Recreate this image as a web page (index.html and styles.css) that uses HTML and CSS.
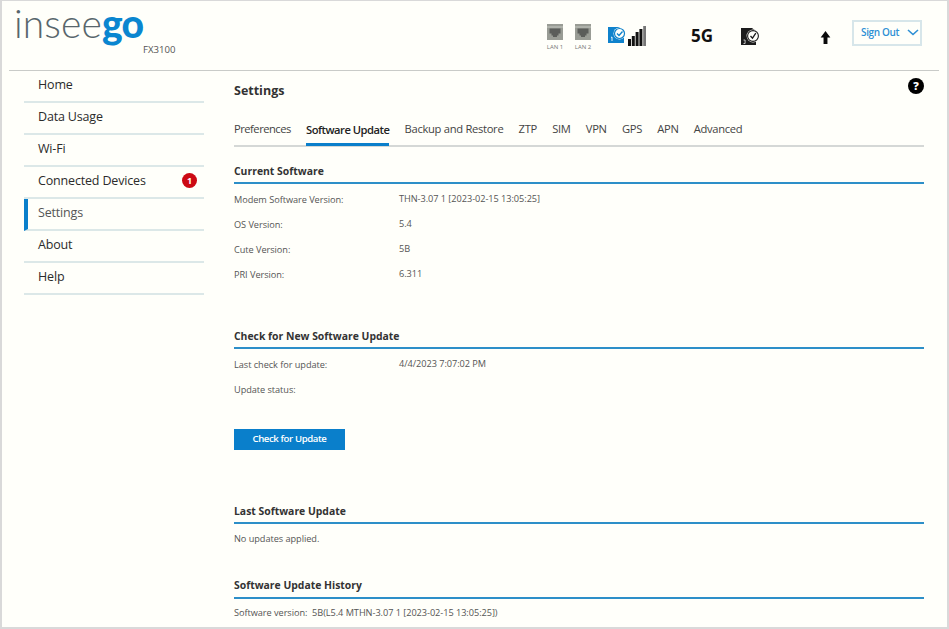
FILE: index.html
```html
<!DOCTYPE html>
<html lang="en">
<head>
<meta charset="utf-8">
<title>Inseego FX3100 Settings</title>
<link rel="stylesheet" href="styles.css">
</head>
<body>
<div class="frame">
  <header class="header">
    <div class="brand">
      <div class="logo"><span class="logo-a">insee</span><span class="logo-b">go</span></div>
      <div class="model">FX3100</div>
    </div>
    <div class="status">
      <div class="lan">
        <svg class="lan-icon" viewBox="0 0 16 16"><rect width="16" height="16" fill="#999c95"/><rect y="2.5" width="16" height="1" fill="#c5c7c1"/><path d="M2.5 4.5h11v5h-2v2h-1.5v1.5H6V11.5H4.5v-2h-2z" fill="#5b5d5a"/></svg>
        <span>LAN 1</span>
      </div>
      <div class="lan lan-second">
        <svg class="lan-icon" viewBox="0 0 16 16"><rect width="16" height="16" fill="#999c95"/><rect y="2.5" width="16" height="1" fill="#c5c7c1"/><path d="M2.5 4.5h11v5h-2v2h-1.5v1.5H6V11.5H4.5v-2h-2z" fill="#5b5d5a"/></svg>
        <span>LAN 2</span>
      </div>
      <svg class="sim-icon" viewBox="0 0 18 16"><path d="M0 0h11l5 4v12H0z" fill="#0f82cc"/><circle cx="11.5" cy="6.5" r="6" fill="#fffffa"/><circle cx="11.5" cy="6.5" r="5" fill="none" stroke="#0f82cc" stroke-width="1.2"/><path d="M9 6.5l2 2 3.5-4" fill="none" stroke="#0f82cc" stroke-width="1.4"/><path d="M3 10.5l1-.5v4" fill="none" stroke="#fff" stroke-width=".9"/></svg>
      <svg class="signal-icon" viewBox="0 0 18 20"><rect x="0" y="13" width="3" height="7" fill="#111"/><rect x="3.8" y="10" width="3" height="10" fill="#111"/><rect x="7.6" y="6" width="3" height="14" fill="#111"/><rect x="11.4" y="3" width="3" height="17" fill="#111"/><rect x="15.2" y="0" width="2.8" height="20" fill="#777"/></svg>
      <div class="net">5G</div>
      <svg class="sim2-icon" viewBox="0 0 19 17"><path d="M0 0h11l4 3v14H0z" fill="#1c1c1c"/><circle cx="12" cy="8" r="6.4" fill="#fffffa"/><circle cx="12" cy="8" r="5.4" fill="none" stroke="#1c1c1c" stroke-width="1.1"/><path d="M9.5 8l2 2.2 3.3-5" fill="none" stroke="#1c1c1c" stroke-width="1.3"/><path d="M2.5 12h1.6v3.5H2.5" fill="none" stroke="#fff" stroke-width=".7"/></svg>
      <svg class="arrow-icon" viewBox="0 0 10 12"><path d="M5 0L9.5 6H6.8v6H3.2V6H.5z" fill="#0a0a0a"/></svg>
      <button class="signout"><span>Sign Out</span><svg class="chev" viewBox="0 0 12 7"><path d="M1 1l5 4.5L11 1" fill="none" stroke="#2d8fd5" stroke-width="1.6"/></svg></button>
    </div>
  </header>
  <div class="body">
    <nav class="side">
      <a class="side-item">Home</a>
      <a class="side-item">Data Usage</a>
      <a class="side-item">Wi-Fi</a>
      <a class="side-item">Connected Devices<span class="badge">1</span></a>
      <a class="side-item active">Settings</a>
      <a class="side-item">About</a>
      <a class="side-item">Help</a>
    </nav>
    <main class="main">
      <div class="title-row">
        <h1 class="title">Settings</h1>
        <span class="help">?</span>
      </div>
      <div class="tabs">
        <a class="tab">Preferences</a>
        <a class="tab current">Software Update</a>
        <a class="tab">Backup and Restore</a>
        <a class="tab">ZTP</a>
        <a class="tab">SIM</a>
        <a class="tab">VPN</a>
        <a class="tab">GPS</a>
        <a class="tab">APN</a>
        <a class="tab">Advanced</a>
      </div>
      <section class="sec sec-current">
        <h2 class="sec-h">Current Software</h2>
        <div class="row"><span class="lbl">Modem Software Version:</span><span class="val">THN-3.07 1 [2023-02-15 13:05:25]</span></div>
        <div class="row"><span class="lbl">OS Version:</span><span class="val">5.4</span></div>
        <div class="row"><span class="lbl">Cute Version:</span><span class="val">5B</span></div>
        <div class="row"><span class="lbl">PRI Version:</span><span class="val">6.311</span></div>
      </section>
      <section class="sec sec-check">
        <h2 class="sec-h">Check for New Software Update</h2>
        <div class="row"><span class="lbl">Last check for update:</span><span class="val">4/4/2023 7:07:02 PM</span></div>
        <div class="row"><span class="lbl">Update status:</span></div>
        <button class="btn">Check for Update</button>
      </section>
      <section class="sec sec-last">
        <h2 class="sec-h">Last Software Update</h2>
        <p class="note">No updates applied.</p>
      </section>
      <section class="sec sec-hist">
        <h2 class="sec-h">Software Update History</h2>
        <p class="note">Software version:&nbsp; 5B(L5.4 MTHN-3.07 1 [2023-02-15 13:05:25])</p>
      </section>
    </main>
  </div>
</div>
</body>
</html>
```
FILE: styles.css
```css
* { box-sizing: border-box; }
html, body { margin: 0; padding: 0; height: 100%; }
body { background: #fff; font-family: "Open Sans", "Noto Sans", sans-serif; color: #333; overflow: hidden; }
.frame { width: 949px; height: 629px; background: #fffffa; border: solid #d9d9d9; border-width: 1px 2px 2px 2px; padding: 0 8px 0 7px; overflow: hidden; }

.header { height: 70px; border-bottom: 1px solid #c9cbc8; display: flex; justify-content: space-between; }
.brand { width: 170px; margin-left: 5px; }
.logo { font-family: Lato, "Open Sans", sans-serif; font-size: 39px; line-height: 38px; height: 38px; margin-top: 3px; white-space: nowrap; }
.logo-a { color: #58666c; font-weight: 300; letter-spacing: 0.1px; }
.logo-b { color: #0a86d0; font-weight: 900; letter-spacing: -0.8px; }
.model { font-size: 9.6px; line-height: 12px; color: #555; margin: 2px 0 0 129px; }

.status { display: flex; align-items: flex-start; padding-top: 23px; }
.lan { display: flex; flex-direction: column; align-items: center; width: 24px; font-size: 6px; line-height: 8px; color: #777; }
.lan-second { margin-left: 4px; }
.lan-icon { width: 16px; height: 16px; margin-bottom: 3px; }
.sim-icon { width: 18px; height: 16px; margin: 3px 0 0 13px; }
.signal-icon { width: 18px; height: 20px; margin: 2px 0 0 2px; }
.net { font-size: 17px; line-height: 24px; font-weight: 700; color: #111; margin-left: 45px; width: 24px; }
.sim2-icon { width: 19px; height: 17px; margin: 4px 0 0 26px; }
.arrow-icon { width: 11px; height: 13px; margin: 7px 0 0 60px; }
.signout { width: 70px; height: 26px; margin: -4px 17px 0 21px; padding: 0 0 2px 7px; display: flex; align-items: center; background: #fffffa; border: 2px solid #d7e6ea; color: #2d8fd5; font: 600 10px "Open Sans", sans-serif; letter-spacing: -0.35px; white-space: nowrap; }
.chev { width: 12px; height: 7px; margin-left: 8px; flex: none; }

.body { display: flex; }
.side { width: 180px; margin-left: 15px; display: flex; flex-direction: column; }
.side-item { height: 32px; display: flex; align-items: center; justify-content: space-between; padding: 0 7px 2.5px 14px; border-bottom: 2px solid #dce8e8; font-size: 12.5px; letter-spacing: -0.17px; color: #2b2b2b; }
.side-item.active { border-left: 4px solid #0a7fcb; padding-left: 10px; color: #555; }
.badge { width: 15px; height: 15px; border-radius: 50%; background: #cc0a14; color: #fff; font-size: 9px; font-weight: 700; display: flex; align-items: center; justify-content: center; }

.main { width: 690px; margin-left: 30px; }
.title-row { height: 34px; display: flex; justify-content: space-between; align-items: flex-start; padding-top: 11px; }
.title { margin: 0; font-size: 12.5px; line-height: 17px; font-weight: 700; color: #333; }
.help { width: 16px; height: 16px; border-radius: 50%; background: #000; color: #fff; font-size: 11px; font-weight: 800; line-height: 16px; text-align: center; margin: -4px 0 0 0; }

.tabs { height: 42px; border-bottom: 2px solid #d5d8d6; display: flex; align-items: flex-end; gap: 15.2px; }
.tab { height: 41px; padding-top: 17px; font-size: 11.2px; line-height: 16px; letter-spacing: -0.3px; color: #444; white-space: nowrap; }
.tab:first-child { letter-spacing: -0.5px; }
.tab.current { color: #222; font-weight: 600; letter-spacing: -0.5px; border-bottom: 3px solid #0a7fcb; margin-bottom: -1px; }

.sec-h { margin: 0; height: 19px; border-bottom: 2px solid #2d8fc8; font-size: 10.4px; line-height: 13px; font-weight: 700; color: #333; }
.sec-current { margin-top: 18px; }
.sec-check { margin-top: 38px; }
.sec-last { margin-top: 55px; }
.sec-hist { margin-top: 33px; }
.sec-hist .sec-h { height: 20px; }
.row { height: 25px; display: flex; font-size: 9.2px; letter-spacing: -0.05px; color: #555; }
.sec .row:first-of-type { margin-top: 8px; }
.lbl { width: 165px; line-height: 16px; }
.val { line-height: 14px; }
.btn { display: block; width: 111px; height: 21px; margin-top: 22px; padding: 0 0 2px; background: #0a7fcb; border: 0; color: #fff; font: 600 9.6px "Open Sans", sans-serif; letter-spacing: -0.4px; }
.note { margin: 8px 0 0; font-size: 9.2px; line-height: 14px; letter-spacing: -0.05px; color: #555; }
.sec-hist .note { margin-top: 7px; }
```
